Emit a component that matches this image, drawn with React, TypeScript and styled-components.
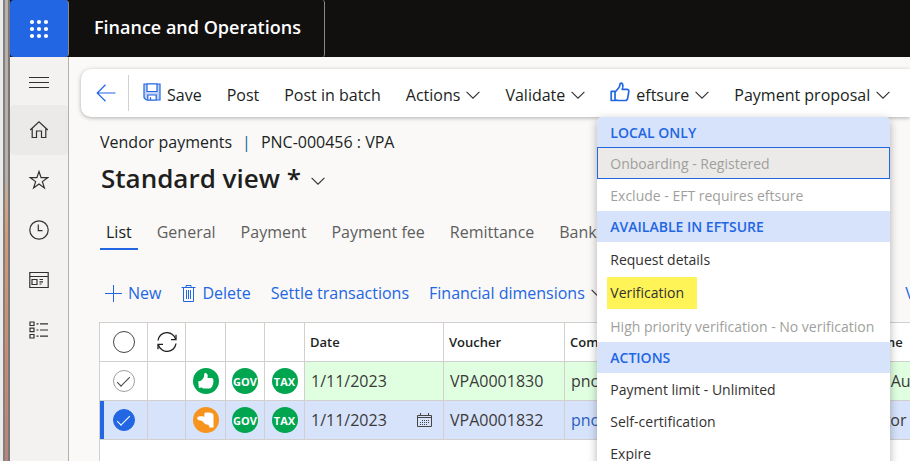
import React from "react";
import styled, { createGlobalStyle } from "styled-components";

const BLUE = "#2266e3";
const PALE = "#d7e3fb";
const LINE = "#d2d0ce";

const GlobalStyle = createGlobalStyle`
  *, *::before, *::after { box-sizing: border-box; }
  body {
    margin: 0;
    overflow: hidden;
    font-family: "Open Sans", "Noto Sans", sans-serif;
    font-size: 16px;
    color: #201f1e;
    background: #faf9f8;
  }
  button {
    font: inherit;
    color: inherit;
    background: none;
    border: 0;
    padding: 0;
    margin: 0;
    cursor: pointer;
    white-space: nowrap;
  }
  svg { display: block; flex: none; }
`;

const Shell = styled.div`
  display: flex;
  height: 100vh;
  overflow: hidden;
`;

const WindowEdge = styled.div`
  flex: none;
  width: 10px;
  border-left: 3px solid #ebebeb;
  border-right: 2px solid #787878;
  background: linear-gradient(#b9b0aa 0 180px, #cfa78c 200px, #d29a76 240px, #c98a72 360px, #b9847a 100%);
  &::before {
    content: "";
    display: block;
    width: 2px;
    height: 100%;
    background: #808080;
  }
`;

const AppColumn = styled.div`
  flex: 1;
  min-width: 0;
  display: flex;
  flex-direction: column;
`;

const TopBar = styled.header`
  display: flex;
  height: 57px;
  flex: none;
  background: #11100f;
  color: #fff;
`;

const Waffle = styled.button`
  width: 59px;
  display: grid;
  place-items: center;
  background: ${BLUE};
  border-right: 1px solid #8a8886;
  border-radius: 4px;
`;

const Brand = styled.div`
  display: flex;
  align-items: center;
  padding: 0 23px 3px 25px;
  font-size: 18px;
  font-weight: 600;
  border-right: 1px solid #8a8886;
  border-radius: 3px;
`;

const Body = styled.div`
  flex: 1;
  min-height: 0;
  display: flex;
`;

const SideNav = styled.nav`
  flex: none;
  width: 59px;
  display: flex;
  flex-direction: column;
  background: #f3f2f1;
  border-right: 1px solid #b3b0ad;
`;

const NavButton = styled.button<{ $active?: boolean; $short?: boolean }>`
  height: ${(p) => (p.$short ? 48 : 50)}px;
  display: grid;
  place-items: center;
  padding-bottom: ${(p) => (p.$short ? 0 : 1)}px;
  border-radius: 4px;
  background: ${(p) => (p.$active ? "#ebeae8" : "transparent")};
`;

const Main = styled.main`
  flex: 1;
  min-width: 0;
  display: flex;
  flex-direction: column;
  padding: 12px 0 0 12px;
`;

const ActionPane = styled.div`
  position: relative;
  z-index: 2;
  flex: none;
  display: flex;
  height: 48px;
  background: #fff;
  border-radius: 10px 0 0 10px;
  box-shadow: 0 1px 4px rgba(0, 0, 0, 0.3);
`;

const BackButton = styled.button`
  width: 48px;
  margin: 6px 1px 6px 0;
  padding-left: 2px;
  display: grid;
  place-items: center;
  border-right: 1px solid #d2d0ce;
`;

const ActionButton = styled.button`
  height: 100%;
  display: flex;
  align-items: center;
  gap: 6px;
  padding: 3px 12px 0 13px;
`;

const LeadIcon = styled.span`
  padding-bottom: 5px;
`;

const MenuAnchor = styled.div`
  position: relative;
`;

const Menu = styled.div`
  position: absolute;
  top: 100%;
  left: 0;
  width: 293px;
  background: #fff;
  border-radius: 5px 5px 0 0;
  overflow: hidden;
  box-shadow: 0 3px 10px rgba(0, 0, 0, 0.3);
  font-size: 14px;
`;

const MenuHeading = styled.div<{ $first?: boolean }>`
  height: ${(p) => (p.$first ? 30 : 31)}px;
  display: flex;
  align-items: center;
  padding: 0 13px;
  background: ${PALE};
  color: ${BLUE};
  font-weight: 600;
`;

const MenuItem = styled.button<{ $tall?: boolean; $focused?: boolean }>`
  width: 100%;
  height: ${(p) => (p.$tall ? 34 : 32)}px;
  display: flex;
  align-items: center;
  padding: ${(p) => (p.$focused ? "0 12px" : "0 13px")};
  border: ${(p) => (p.$focused ? `1px solid ${BLUE}` : "0")};
  background: ${(p) => (p.$focused ? "#ebeae8" : "transparent")};
  color: #323130;
  &:disabled { color: #a19f9d; cursor: default; }
`;

const Marked = styled.span`
  margin-left: -3px;
  padding: 0 13px 0 3px;
  line-height: 32px;
  background: #fff457;
`;

const Crumbs = styled.div`
  display: flex;
  gap: 10px;
  padding: 14px 0 0 19px;
  line-height: 22px;
  white-space: nowrap;
`;

const CrumbBar = styled.span`
  color: #10669c;
`;

const TitleButton = styled.button`
  align-self: flex-start;
  display: flex;
  align-items: center;
  gap: 10px;
  margin-left: 20px;
  font-size: 26px;
  font-weight: 600;
  line-height: 50px;
  svg { margin-top: 6px; }
`;

const Tabs = styled.div`
  display: flex;
  gap: 13px;
  margin: 12px 0 0 19px;
  overflow: hidden;
  flex: none;
`;

const Tab = styled.button<{ $active?: boolean }>`
  height: 35px;
  padding: 0 6px;
  color: ${(p) => (p.$active ? "#201f1e" : "#605e5c")};
  border-bottom: 2px solid ${(p) => (p.$active ? BLUE : "transparent")};
`;

const GridTools = styled.div`
  display: flex;
  gap: 20px;
  flex: none;
  height: 72px;
  padding: 13px 0 0 24px;
  overflow: hidden;
`;

const ToolButton = styled.button`
  height: 60px;
  display: flex;
  align-items: center;
  gap: 6px;
  color: ${BLUE};
`;

const GridFrame = styled.div`
  flex: 1;
  min-height: 0;
  margin-left: 18px;
  overflow: hidden;
  background: #fff;
  border: 1px solid ${LINE};
  border-width: 1px 0 0 1px;
`;

const Grid = styled.table`
  table-layout: fixed;
  width: 1000px;
  border-collapse: separate;
  border-spacing: 0;
`;

const Col = styled.col<{ $w: number }>`
  width: ${(p) => p.$w}px;
`;

const HeadCell = styled.th`
  height: 39px;
  padding: 0 5px;
  text-align: left;
  font-size: 13px;
  font-weight: 600;
  white-space: nowrap;
  border-right: 1px solid ${LINE};
  border-bottom: 1px solid ${LINE};
`;

const Row = styled.tr<{ $selected?: boolean }>`
  background: ${(p) => (p.$selected ? PALE : "#fff")};
  & > td:first-child {
    box-shadow: ${(p) => (p.$selected ? `inset 4px 0 0 ${BLUE}` : "none")};
  }
`;

const Cell = styled.td<{ $green?: boolean; $link?: boolean }>`
  height: 39px;
  padding: 0 6px;
  color: ${(p) => (p.$link ? "#2b5fc0" : "#3b3a39")};
  background: ${(p) => (p.$green ? "#e0ffe1" : "transparent")};
  border-right: 1px solid ${LINE};
  border-bottom: 1px solid ${LINE};
  white-space: nowrap;
`;

const Centered = styled.div`
  display: grid;
  place-items: center;
`;

const DateValue = styled.div`
  display: flex;
  align-items: center;
  justify-content: space-between;
  padding-right: 5px;
`;

const RoundCheck = styled.input<{ $mark?: boolean }>`
  appearance: none;
  display: grid;
  place-items: center;
  width: 22px;
  height: 22px;
  margin: 0;
  border: 1px solid ${(p) => (p.$mark ? "#a19f9d" : "#484644")};
  border-radius: 50%;
  &::after {
    content: "";
    display: ${(p) => (p.$mark ? "block" : "none")};
    width: 13px;
    height: 6px;
    margin-bottom: 3px;
    border: solid #484644;
    border-width: 0 0 1px 1px;
    transform: rotate(-45deg);
  }
  &:checked { background: ${BLUE}; border-color: ${BLUE}; }
  &:checked::after { border-color: #fff; }
`;

const Badge = styled.span<{ $color?: string }>`
  display: grid;
  place-items: center;
  width: 26px;
  height: 26px;
  border-radius: 50%;
  background: ${(p) => p.$color ?? "#00a54f"};
  color: #fff;
  font-size: 11px;
  font-weight: 700;
`;

const Chevron = () => (
  <svg width="14" height="8" viewBox="0 0 14 8" fill="none" stroke="#323130" strokeWidth="1.1">
    <path d="M.6.8 7 7.2 13.4.8" />
  </svg>
);

const ThumbOutline = () => (
  <svg width="20" height="20" viewBox="0 0 20 20" fill="none" stroke={BLUE} strokeWidth="1.700" strokeLinejoin="round">
    <path d="M1.200 9.300h3.800v9.200H1.200zM5 10.200l3.800-4.400c.9-1 1-2.700 1.200-3.900.2-1.100 1.800-1.200 2.500.1.800 1.500.4 3.700-.3 5.400h4.700c1.400 0 2.100 1 1.900 2.200l-1.200 6.800c-.2 1.400-1.100 2.100-2.300 2.100H8.200c-1.200 0-2.100-.5-3.200-1" />
  </svg>
);

const ThumbUp = () => (
  <svg width="16" height="16" viewBox="0 0 16 16" fill="#fff">
    <path d="M.2 8.200c1.600.4 3-.3 4-1.600C5.500 5 6.300 3.900 6.200 1.600 6.200.3 7.200-.1 8.200.2c1.500.5 1.800 2.400 1.300 4.700h4c1.700 0 2.200 1.500 1.500 2.400.8.7.8 1.900 0 2.500.5.900.2 1.900-.6 2.400.2 1-.3 1.800-1.200 2.100-.2.800-.8 1.300-1.700 1.300H6.300c-1.200 0-2-.5-3-1L.9 15z" />
  </svg>
);

const ThumbSide = () => (
  <svg width="17" height="16" viewBox="0 0 17 16" fill="#fff">
    <path d="M12.400 15.600h4.100V3.600c0-1.500-.7-2.300-1.900-2.300-.5-.8-1.500-1.100-2.300-.6-.8-.8-2-.7-2.600.1-.9-.5-2.200-.1-2.300 1v2.900C5.500 4.500 3.700 4.200 2 4.500c-1.500.2-2.100 1.300-1.700 2.300.4 1.100 1.600 1.500 3 1.700 1.500.2 2.400 1 3.300 2 .8 1 1.700 1.900 3.100 2 1.500.1 2.500.5 2.700 3.100z" />
  </svg>
);

const SaveIcon = () => (
  <svg width="18" height="18" viewBox="0 0 18 18" fill="none" stroke={BLUE} strokeWidth="1.200">
    <path fill="#c3d3f8" d="M1 1h16v16H3.300L1 14.700z" />
    <path fill="#fff" d="M4 1v7.500h10V1z" />
    <path fill="#fff" d="M4.800 17v-5h8.400v5z" />
    <path d="M7.500 17v-2.800" />
  </svg>
);

const BackIcon = () => (
  <svg width="20" height="18" viewBox="0 0 20 18" fill="none" stroke={BLUE} strokeWidth="1.200">
    <path d="M9.500.8 1.200 9l8.300 8.200M1.200 9H19.500" />
  </svg>
);

const PlusIcon = () => (
  <svg width="17" height="17" viewBox="0 0 17 17" stroke={BLUE}>
    <path d="M8.500 0v17M0 8.500h17" />
  </svg>
);

const TrashIcon = () => (
  <svg width="15" height="17" viewBox="0 0 15 17" fill="none" stroke={BLUE}>
    <path d="M.5 2.500h14M5 2.500v-2h5v2M2.500 2.500v14h10v-14M5.500 5v9M7.500 5v9M9.500 5v9" />
  </svg>
);

const CalendarIcon = () => (
  <svg width="15" height="15" viewBox="0 0 15 15" fill="none" stroke="#484644">
    <path d="M.5 2.500h14v11H.5zM.5 4.500h14M3.500 0v3M11.500 0v3" />
    <path d="M5 7.500h8M3 9.500h9M3 11.500h7" strokeDasharray="1 1" />
  </svg>
);

const RefreshIcon = () => (
  <svg width="20" height="20" viewBox="0 0 20 20" fill="none" stroke="#201f1e" strokeWidth="1.300">
    <path d="M1 8.500A9 9 0 0 1 18.600 7.200M19 11.500A9 9 0 0 1 1.400 12.800" />
    <path d="M19 2.800V7.600h-5M1 17.200V12.400h5" />
  </svg>
);

const WaffleIcon = () => (
  <svg width="20" height="20" viewBox="0 0 20 20" fill="#fff">
    {[3, 10, 17].map((y) => [3, 10, 17].map((x) => <circle key={`${x}-${y}`} cx={x} cy={y} r="2.100" />))}
  </svg>
);

const NavSvg = ({ children }: { children: React.ReactNode }) => (
  <svg width="20" height="20" viewBox="0 0 20 20" fill="none" stroke="#323130" strokeWidth="1.200">
    {children}
  </svg>
);

const navItems = [
  { label: "Home", icon: <path d="M1.200 10 10 1.800 18.800 10M3.200 8.500v9h4.300v-6.500h5v6.500h4.300v-9" /> },
  { label: "Favorites", icon: <path d="m10 1.500 2.100 6.200h6.500l-5.200 3.900 2 6.300L10 14.100l-5.400 3.800 2-6.300-5.200-3.900h6.500z" /> },
  { label: "Recent", icon: <path d="M10 .8a9.200 9.200 0 1 1 0 18.400A9.200 9.200 0 0 1 10 .8M9.300 4.500v6.200h4.200" /> },
  { label: "Workspaces", icon: <path d="M.8 2.500h18.400v15H.8zM.8 6.500h18.400M3 9.500h5v5H3zM10.500 9.500h3.500M10.500 11.800h3.500M10.500 14h2" /> },
  { label: "Modules", icon: <path d="M1 2h4v3.500H1zM1 8.200h4v3.500H1zM1 14.500h4V18H1zM7.500 3.800h2M11 3.800h8M7.500 10h2M11 10h8M7.500 16.200h2M11 16.200h8" /> },
];

const columns = [48, 38, 40, 39, 40, 139, 121, 165, 130, 240];

const rows = [
  { selected: false, voucher: "VPA0001830", name: "EU Au" },
  { selected: true, voucher: "VPA0001832", name: "Tutor" },
];

export default function App() {
  return (
    <Shell>
      <GlobalStyle />
      <WindowEdge />
      <AppColumn>
        <TopBar>
          <Waffle aria-label="App launcher"><WaffleIcon /></Waffle>
          <Brand>Finance and Operations</Brand>
        </TopBar>
        <Body>
          <SideNav>
            <NavButton $short aria-label="Expand navigation">
              <NavSvg><path d="M0 6.500h20M0 11.500h20M0 16.500h20" /></NavSvg>
            </NavButton>
            {navItems.map((item, i) => (
              <NavButton key={item.label} $active={i === 0} aria-label={item.label}>
                <NavSvg>{item.icon}</NavSvg>
              </NavButton>
            ))}
          </SideNav>
          <Main>
            <ActionPane>
              <BackButton aria-label="Back"><BackIcon /></BackButton>
              <ActionButton><LeadIcon><SaveIcon /></LeadIcon>Save</ActionButton>
              <ActionButton>Post</ActionButton>
              <ActionButton>Post in batch</ActionButton>
              <ActionButton>Actions<Chevron /></ActionButton>
              <ActionButton>Validate<Chevron /></ActionButton>
              <MenuAnchor>
                <ActionButton aria-expanded="true"><LeadIcon><ThumbOutline /></LeadIcon>eftsure<Chevron /></ActionButton>
                <Menu>
                  <MenuHeading $first>LOCAL ONLY</MenuHeading>
                  <MenuItem disabled $focused>Onboarding - Registered</MenuItem>
                  <MenuItem disabled>Exclude - EFT requires eftsure</MenuItem>
                  <MenuHeading>AVAILABLE IN EFTSURE</MenuHeading>
                  <MenuItem $tall>Request details</MenuItem>
                  <MenuItem $tall><Marked>Verification</Marked></MenuItem>
                  <MenuItem disabled>High priority verification - No verification</MenuItem>
                  <MenuHeading>ACTIONS</MenuHeading>
                  <MenuItem>Payment limit - Unlimited</MenuItem>
                  <MenuItem>Self-certification</MenuItem>
                  <MenuItem>Expire</MenuItem>
                </Menu>
              </MenuAnchor>
              <ActionButton>Payment proposal<Chevron /></ActionButton>
            </ActionPane>
            <Crumbs>
              <span>Vendor payments</span>
              <CrumbBar>|</CrumbBar>
              <span>PNC-000456 : VPA</span>
            </Crumbs>
            <TitleButton>Standard view *<Chevron /></TitleButton>
            <Tabs role="tablist">
              {["List", "General", "Payment", "Payment fee", "Remittance", "Bank"].map((t, i) => (
                <Tab key={t} role="tab" aria-selected={i === 0} $active={i === 0}>{t}</Tab>
              ))}
            </Tabs>
            <GridTools>
              <ToolButton><PlusIcon />New</ToolButton>
              <ToolButton><TrashIcon />Delete</ToolButton>
              <ToolButton>Settle transactions</ToolButton>
              <ToolButton>Financial dimensions<Chevron /></ToolButton>
              <ToolButton>Functions<Chevron /></ToolButton>
              <ToolButton>Inquiry<Chevron /></ToolButton>
              <ToolButton>Print<Chevron /></ToolButton>
              <ToolButton>View marked</ToolButton>
            </GridTools>
            <GridFrame>
              <Grid>
                <colgroup>{columns.map((w, i) => <Col key={i} $w={w} />)}</colgroup>
                <thead>
                  <tr>
                    <HeadCell><Centered><RoundCheck type="checkbox" aria-label="Select all" /></Centered></HeadCell>
                    <HeadCell><Centered><RefreshIcon /></Centered></HeadCell>
                    <HeadCell /><HeadCell /><HeadCell />
                    <HeadCell>Date</HeadCell>
                    <HeadCell>Voucher</HeadCell>
                    <HeadCell>Company</HeadCell>
                    <HeadCell />
                    <HeadCell>Name</HeadCell>
                  </tr>
                </thead>
                <tbody>
                  {rows.map((r) => (
                    <Row key={r.voucher} $selected={r.selected}>
                      <Cell>
                        <Centered>
                          <RoundCheck type="checkbox" $mark defaultChecked={r.selected} aria-label={`Select ${r.voucher}`} />
                        </Centered>
                      </Cell>
                      <Cell />
                      <Cell>
                        <Centered>
                          <Badge $color={r.selected ? "#f7941d" : undefined}>{r.selected ? <ThumbSide /> : <ThumbUp />}</Badge>
                        </Centered>
                      </Cell>
                      <Cell><Centered><Badge>GOV</Badge></Centered></Cell>
                      <Cell><Centered><Badge>TAX</Badge></Centered></Cell>
                      <Cell $green={!r.selected}>
                        <DateValue>1/11/2023{r.selected && <CalendarIcon />}</DateValue>
                      </Cell>
                      <Cell $green={!r.selected}>{r.voucher}</Cell>
                      <Cell $green={!r.selected} $link={r.selected}>pnc</Cell>
                      <Cell $green={!r.selected} />
                      <Cell $green={!r.selected}>{r.name}</Cell>
                    </Row>
                  ))}
                </tbody>
              </Grid>
            </GridFrame>
          </Main>
        </Body>
      </AppColumn>
    </Shell>
  );
}
